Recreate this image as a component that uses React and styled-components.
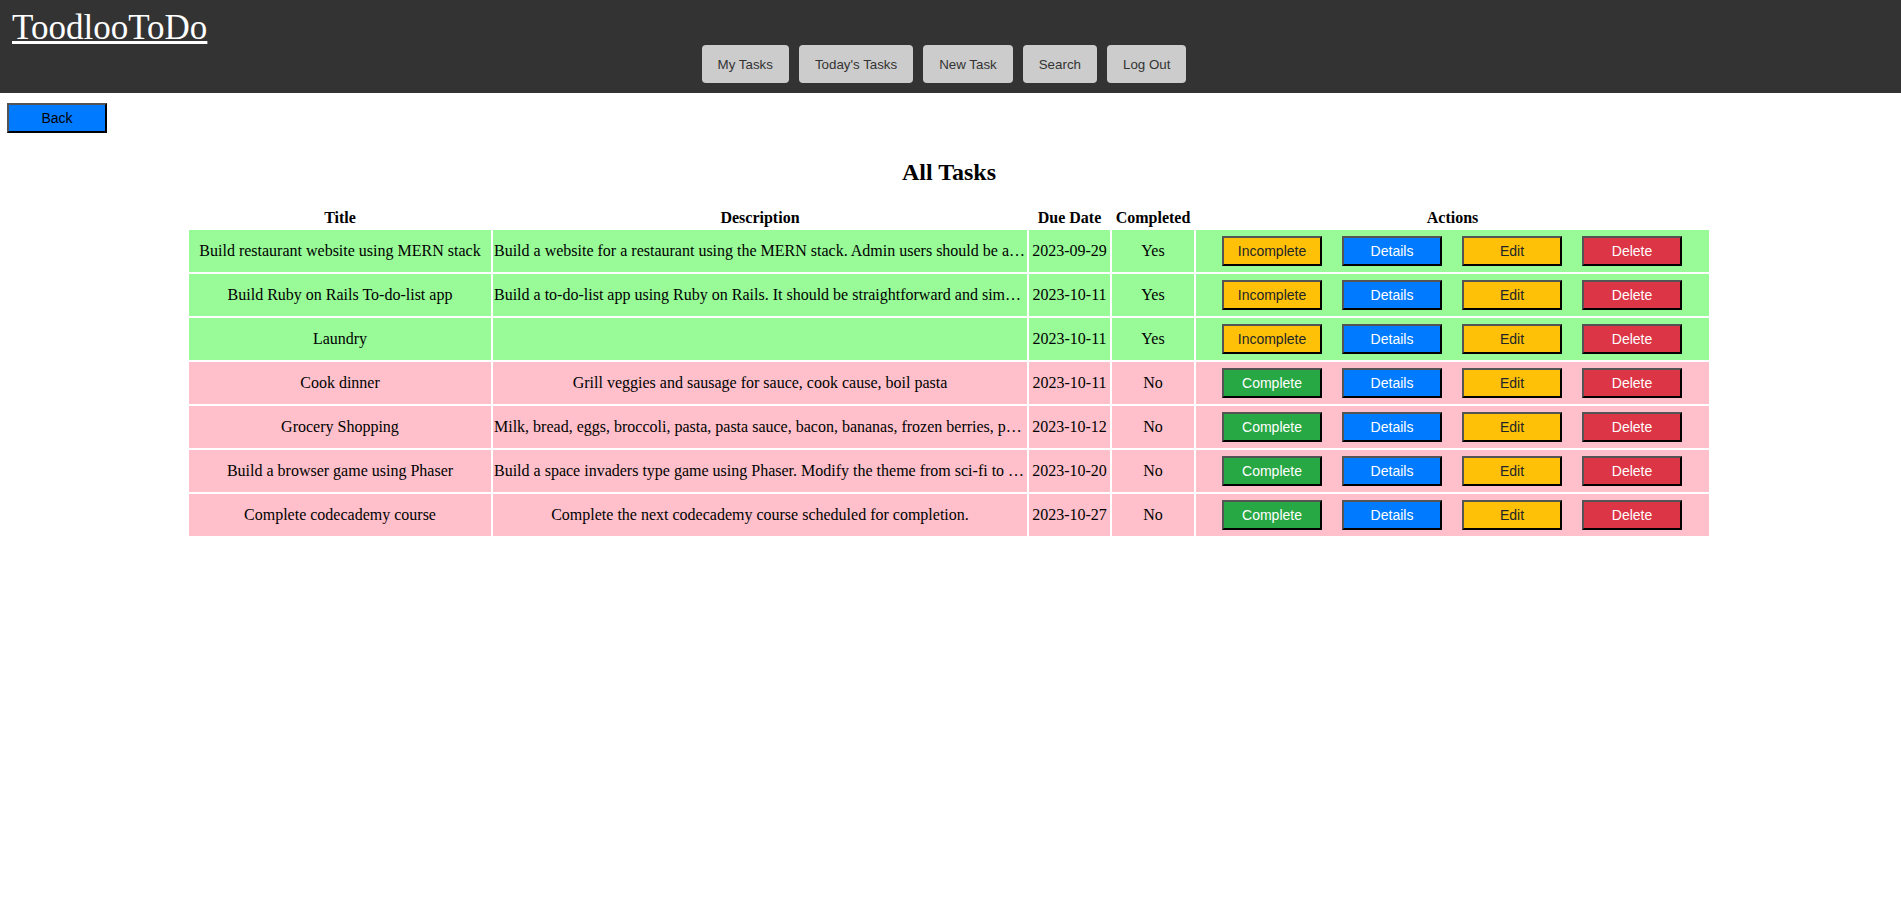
import React from "react";
import styled, { createGlobalStyle } from "styled-components";

const GlobalStyle = createGlobalStyle`
  body {
    margin: 0;
    background: #fff;
    color: #000;
    font-family: "Liberation Serif", "Times New Roman", serif;
    font-size: 16px;
  }
`;

const Header = styled.header`
  background: #333;
  padding: 10px 3px 10px 12px;
`;

const Brand = styled.a`
  display: block;
  width: max-content;
  color: #fff;
  font-size: 35px;
  line-height: 35px;
  text-decoration: underline;
  text-decoration-thickness: 3px;
`;

const Nav = styled.nav`
  display: flex;
  justify-content: center;
  margin-left: -12px;
`;

const NavButton = styled.button`
  margin-right: 10px;
  padding: 11px 16px 9px;
  border: 0;
  border-radius: 4px;
  background: #ccc;
  color: #333;
  font-family: "Liberation Sans", Arial, sans-serif;
  line-height: 18px;
  cursor: pointer;
`;

const Main = styled.main`
  padding: 10px 3px 20px 0;
`;

const palette = {
  primary: ["#007bff", "#fff"],
  back: ["#007bff", "#000"],
  warning: ["#ffc107", "#212529"],
  success: ["#28a745", "#fff"],
  danger: ["#dc3545", "#fff"],
};

const Button = styled.button`
  box-sizing: border-box;
  width: 100px;
  height: 30px;
  padding: 0;
  border: 2px outset #000;
  background: ${(p) => palette[p.$tone][0]};
  color: ${(p) => palette[p.$tone][1]};
  font-family: "Liberation Sans", Arial, sans-serif;
  font-size: 14px;
  cursor: pointer;
`;

const BackBar = styled.div`
  display: flex;
  padding: 0 7px 5px;
`;

const Heading = styled.h2`
  margin: 20px 0;
  font-size: 24px;
  line-height: 28px;
  text-align: center;
`;

const TableWrap = styled.div`
  padding: 0 187px;
`;

const Table = styled.table`
  width: 100%;
  table-layout: fixed;
  border-collapse: separate;
  border-spacing: 2px;
  line-height: 18px;
`;

const Col = styled.col`
  width: ${(p) => p.$width};
`;

const HeadCell = styled.th`
  padding: 1px;
`;

const Row = styled.tr`
  background: ${(p) => (p.$done ? "palegreen" : "pink")};
`;

const Cell = styled.td`
  padding: 1px;
  overflow: hidden;
  text-align: center;
  text-overflow: ellipsis;
  white-space: nowrap;
`;

const Actions = styled.div`
  display: flex;
  justify-content: center;
  gap: 20px;
  padding: 5px 1px 5px 0;
`;

const links = ["My Tasks", "Today's Tasks", "New Task", "Search", "Log Out"];

const tasks = [
  {
    title: "Build restaurant website using MERN stack",
    description:
      "Build a website for a restaurant using the MERN stack. Admin users should be able to edit the menu.",
    due: "2023-09-29",
    done: true,
  },
  {
    title: "Build Ruby on Rails To-do-list app",
    description:
      "Build a to-do-list app using Ruby on Rails. It should be straightforward and simple to use.",
    due: "2023-10-11",
    done: true,
  },
  { title: "Laundry", description: "", due: "2023-10-11", done: true },
  {
    title: "Cook dinner",
    description: "Grill veggies and sausage for sauce, cook cause, boil pasta",
    due: "2023-10-11",
    done: false,
  },
  {
    title: "Grocery Shopping",
    description:
      "Milk, bread, eggs, broccoli, pasta, pasta sauce, bacon, bananas, frozen berries, pork, rice",
    due: "2023-10-12",
    done: false,
  },
  {
    title: "Build a browser game using Phaser",
    description:
      "Build a space invaders type game using Phaser. Modify the theme from sci-fi to medieval fantasy.",
    due: "2023-10-20",
    done: false,
  },
  {
    title: "Complete codecademy course",
    description: "Complete the next codecademy course scheduled for completion.",
    due: "2023-10-27",
    done: false,
  },
];

function TaskRow({ task }) {
  return (
    <Row $done={task.done}>
      <Cell>{task.title}</Cell>
      <Cell>{task.description}</Cell>
      <Cell>{task.due}</Cell>
      <Cell>{task.done ? "Yes" : "No"}</Cell>
      <Cell>
        <Actions>
          <Button type="button" $tone={task.done ? "warning" : "success"}>
            {task.done ? "Incomplete" : "Complete"}
          </Button>
          <Button type="button" $tone="primary">Details</Button>
          <Button type="button" $tone="warning">Edit</Button>
          <Button type="button" $tone="danger">Delete</Button>
        </Actions>
      </Cell>
    </Row>
  );
}

export default function App() {
  return (
    <>
      <GlobalStyle />
      <Header>
        <Brand href="#">ToodlooToDo</Brand>
        <Nav>
          {links.map((label) => (
            <NavButton key={label} type="button">{label}</NavButton>
          ))}
        </Nav>
      </Header>
      <Main>
        <BackBar>
          <Button type="button" $tone="back">Back</Button>
        </BackBar>
        <Heading>All Tasks</Heading>
        <TableWrap>
          <Table>
            <colgroup>
              <Col $width="302px" />
              <Col />
              <Col $width="81px" />
              <Col $width="82px" />
              <Col $width="513px" />
            </colgroup>
            <thead>
              <tr>
                <HeadCell scope="col">Title</HeadCell>
                <HeadCell scope="col">Description</HeadCell>
                <HeadCell scope="col">Due Date</HeadCell>
                <HeadCell scope="col">Completed</HeadCell>
                <HeadCell scope="col">Actions</HeadCell>
              </tr>
            </thead>
            <tbody>
              {tasks.map((task) => (
                <TaskRow key={task.title} task={task} />
              ))}
            </tbody>
          </Table>
        </TableWrap>
      </Main>
    </>
  );
}
